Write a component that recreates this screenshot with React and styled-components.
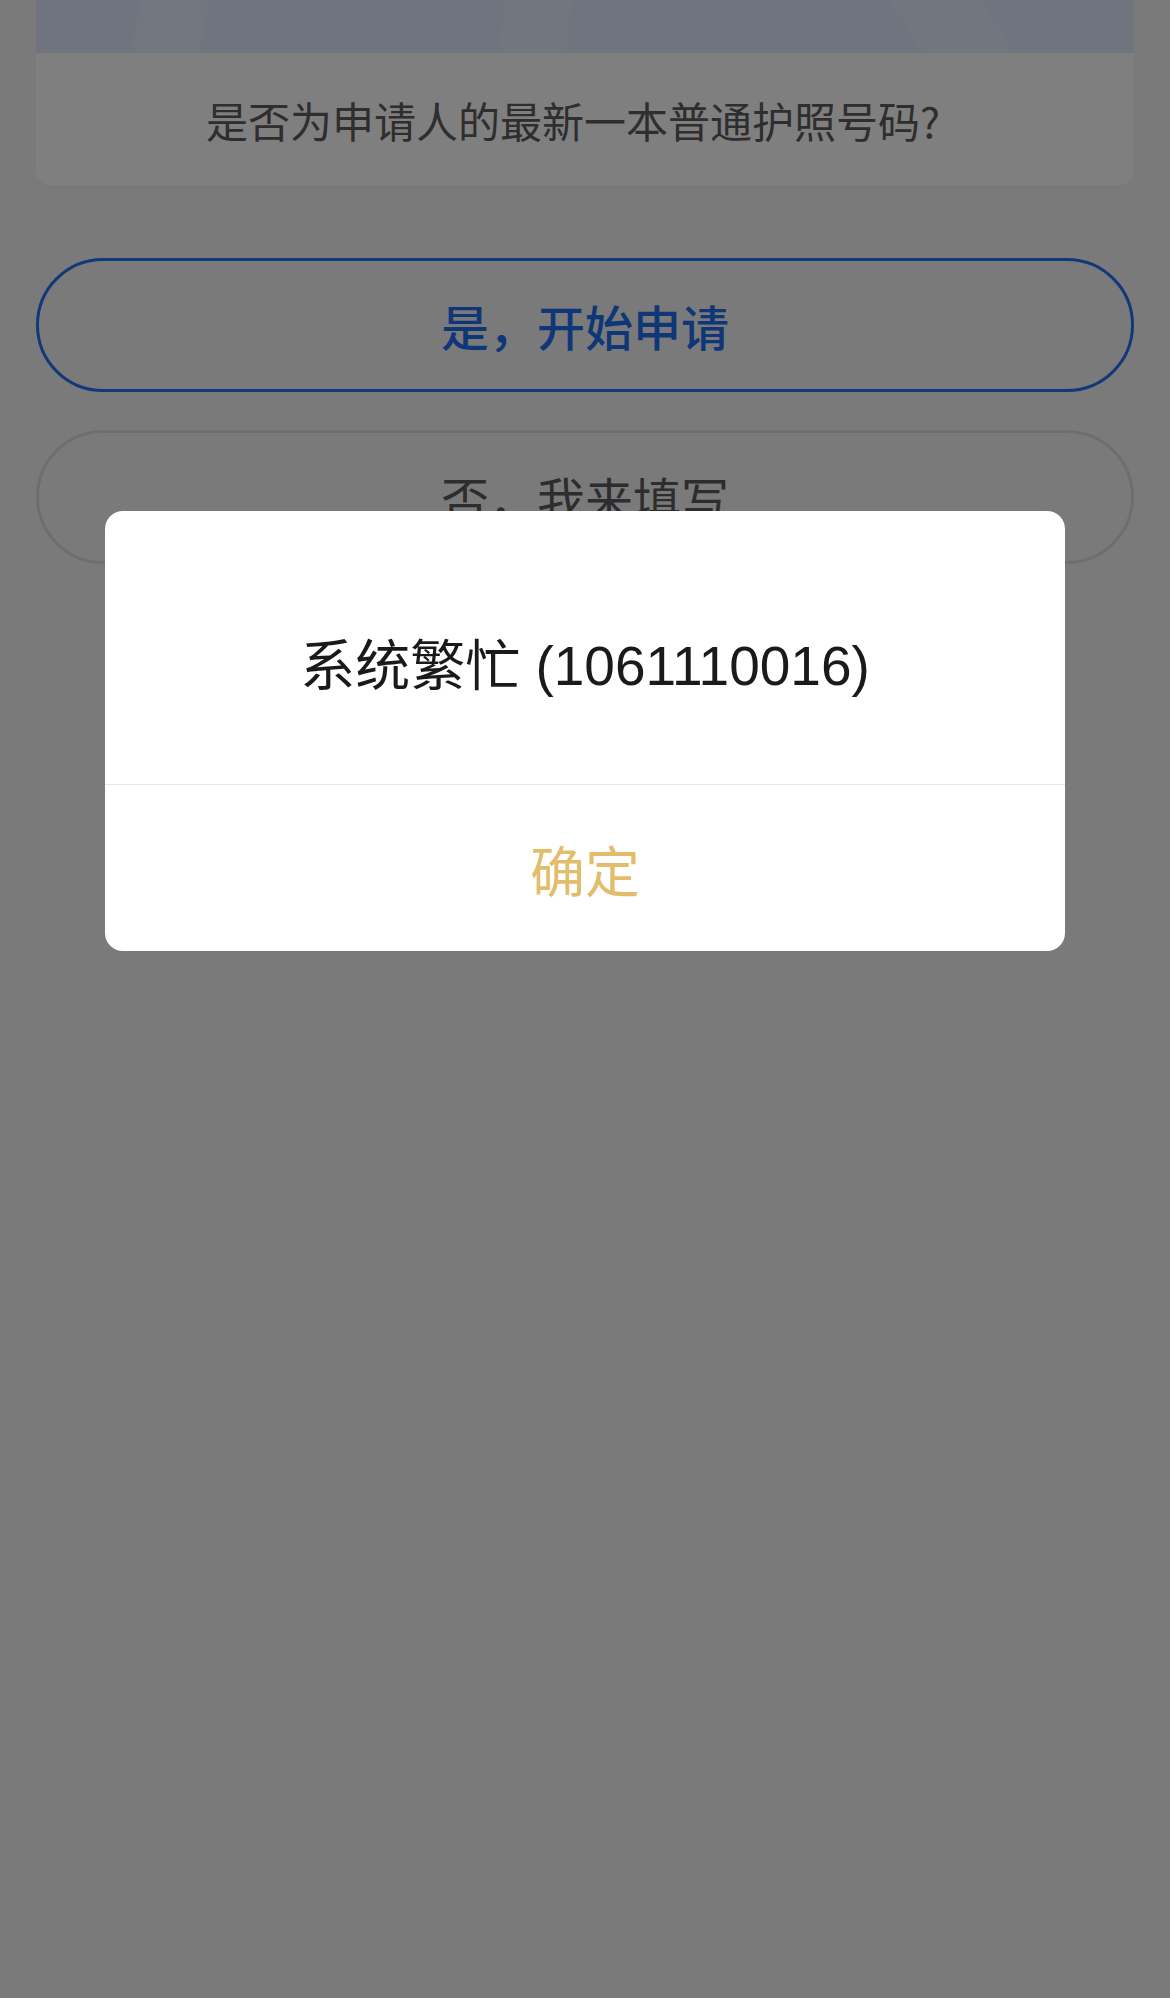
import React from 'react';
import styled, { createGlobalStyle } from 'styled-components';

const GlobalStyle = createGlobalStyle`
  html, body {
    margin:0;
    padding:0;
    background-color:#f5f5f5;
    font-family:"Liberation Sans", "Noto Sans CJK SC", sans-serif;
  }
`;

const Page = styled.div`
  min-height:1998px;
  padding:0 36px;
  display:flex;
  flex-direction:column;
`;

const Card = styled.div`
  background-color:white;
  border-radius:0 0 15px 15px;
  overflow:hidden;
`;

const Banner = styled.div`
  height:53px;
  background-color:#dee9ff;
  background-image:
    linear-gradient(100deg, transparent 9%, rgba(255,255,255,0.25) 10%, rgba(255,255,255,0.25) 15%, transparent 16%),
    linear-gradient(95deg, transparent 42%, rgba(255,255,255,0.2) 43%, rgba(255,255,255,0.2) 48%, transparent 49%),
    linear-gradient(60deg, transparent 78%, rgba(255,255,255,0.2) 79%, rgba(255,255,255,0.2) 86%, transparent 87%);
`;

const Question = styled.div`
  height:132px;
  display:flex;
  align-items:center;
  justify-content:center;
  padding-right:24px;
  font-family:"Noto Sans CJK SC", sans-serif;
  font-size:42px;
  color:#5c5c5c;
`;

const Actions = styled.div`
  display:flex;
  flex-direction:column;
  gap:38px;
  margin-top:73px;
`;

const PillButton = styled.button`
  height:134px;
  border-radius:67px;
  border:3px solid ${p => p.primary ? '#2370f0' : '#dcdcdc'};
  background:transparent;
  color:${p => p.primary ? '#1f6ef0' : '#5a5a5a'};
  font-family:"Noto Sans CJK SC", sans-serif;
  font-size:48px;
  font-weight:${p => p.primary ? 500 : 400};
  padding:0;
`;

const Overlay = styled.div`
  position:fixed;
  inset:0;
  background-color:rgba(0,0,0,0.5);
  display:flex;
  flex-direction:column;
  align-items:center;
  padding-top:511px;
`;

const Dialog = styled.div`
  width:960px;
  background-color:white;
  border-radius:18px;
  overflow:hidden;
  display:flex;
  flex-direction:column;
`;

const Message = styled.div`
  padding:117px 20px 79px;
  text-align:center;
  font-size:55px;
  line-height:77px;
  color:#1a1a1a;
  border-bottom:1px solid #e6e6e6;
`;

const Confirm = styled.div`
  height:166px;
  display:flex;
  align-items:center;
  justify-content:center;
  font-family:"Noto Sans CJK SC", sans-serif;
  font-size:55px;
  color:#e3bd6c;
`;

const App = () => {
  return (
    <>
      <GlobalStyle />
      <Page>
        <Card>
          <Banner />
          <Question>是否为申请人的最新一本普通护照号码?</Question>
        </Card>

        <Actions>
          <PillButton primary>是，开始申请</PillButton>
          <PillButton>否，我来填写</PillButton>
        </Actions>
      </Page>

      <Overlay>
        <Dialog>
          <Message>系统繁忙 (1061110016)</Message>
          <Confirm>确定</Confirm>
        </Dialog>
      </Overlay>
    </>
  );
};

export default App;
